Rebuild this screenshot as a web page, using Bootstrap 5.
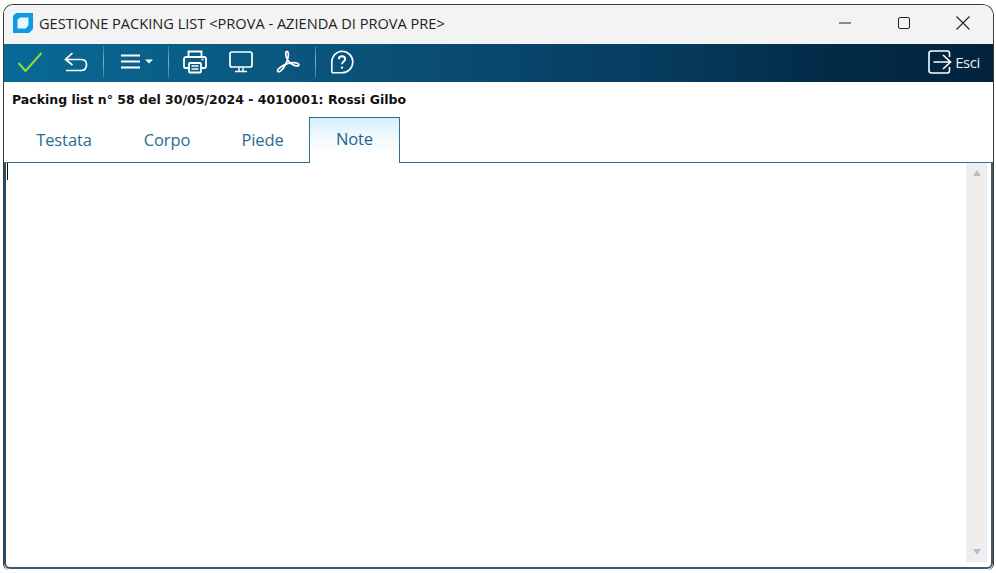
<!DOCTYPE html>
<html lang="it">
<head>
<meta charset="utf-8">
<title>Gestione Packing List</title>
<link href="https://cdn.jsdelivr.net/npm/bootstrap@5.3.0/dist/css/bootstrap.min.css" rel="stylesheet">
<style>
html,body{height:100%;background:#fff;overflow:hidden}
body{padding:4px 2px 3px 3px}
.app-window{height:566px;border:1px solid #3a3a3a;border-bottom:0;border-radius:10px 12px 6px 6px;background:#fff;overflow:hidden}
.title-bar{height:39px;background:#f3f3f3;font:14.6px "Open Sans",sans-serif;color:#222;padding:0 0 3px 9px}
.title-text{margin-left:6px}
.win-btn{width:59px;height:36px;display:flex;align-items:center;justify-content:center}
.win-controls{margin-left:auto;margin-right:1px}
.tool-bar{height:38px;background:linear-gradient(90deg,#076a96 0%,#0a5b83 22%,#0a4d74 42%,#063a5c 68%,#032c49 82%,#02233d 100%);padding:0 13px 2px 4px;color:#fff}
.tool-icon{display:flex;align-items:center;justify-content:center;height:36px}
.tool-check{width:44px}
.tool-undo{width:47px;margin-right:4px}
.tool-menu{width:64px;padding-left:2px}
.tool-print{width:52px;margin-right:1px}
.tool-screen{width:38px}
.tool-pdf{width:55px}
.tool-help{width:52px}
.tool-sep{width:1px;height:32px;background:linear-gradient(180deg,#2c7ea6,#7fb2cb 50%,#2c7ea6)}
.exit-group{margin-left:auto}
.exit-label{font:15px "Open Sans",sans-serif;letter-spacing:-.4px;color:#e8eef2;margin-left:3px}
.exit-icon{margin-left:-2px}
.doc-heading{height:35px;padding:9px 0 0 8px;font:700 12.5px "DejaVu Sans",sans-serif;color:#111;line-height:18px;white-space:nowrap}
.tab-strip{height:46px;border-bottom:1px solid #2f6f8f;align-items:flex-end}
.tab-item{height:45px;display:flex;align-items:center;justify-content:center;font:16.5px "Open Sans",sans-serif;letter-spacing:-.1px;color:#2b6c90}
.tab-t{width:114px;margin-left:3px}
.tab-c{width:94px;margin-left:-1px}
.tab-p{width:97px}
.tab-n{width:91px;height:46px;margin-left:-2px;margin-bottom:-1px;border:1px solid #2f6f8f;border-bottom:0;background:linear-gradient(180deg,#d6effb 0%,#f2fafe 45%,#fff 80%);padding-bottom:5px;color:#1f6488}
.note-area{height:406px;border-left:2px solid #27506e;border-bottom:2px solid #3c5a70;border-right:2px solid #3d5a70;border-radius:0 0 6px 6px}
.caret-line{width:1px;height:17px;background:#111;margin:0 0 0 1px}
.scroll-track{width:21px;height:399px;margin-right:4px;background:#eeeeee;padding:7px 0}
.tri-up{width:0;height:0;border:4.5px solid transparent;border-top:0;border-bottom:6px solid #b9bec6}
.tri-down{width:0;height:0;border:4.5px solid transparent;border-bottom:0;border-top:6px solid #b9bec6}
</style>
</head>
<body>
<div class="app-window d-flex flex-column">
  <div class="title-bar d-flex align-items-center flex-shrink-0">
    <svg width="20" height="20" viewBox="0 0 20 20"><path d="M3 0H20V16L16 20H0V3Z" fill="#0a9be3"/><path d="M7 4.500H15.500V12L13 15.500H4.500V7Z" fill="#eaf7fd"/></svg>
    <span class="title-text">GESTIONE PACKING LIST &lt;PROVA - AZIENDA DI PROVA PRE&gt;</span>
    <div class="win-controls d-flex">
      <div class="win-btn"><svg width="12" height="12" viewBox="0 0 12 12"><path d="M0 6H12" stroke="#222"/></svg></div>
      <div class="win-btn"><svg width="12" height="12" viewBox="0 0 12 12"><rect x=".5" y=".5" width="11" height="11" rx="1.500" fill="none" stroke="#222"/></svg></div>
      <div class="win-btn"><svg width="14" height="14" viewBox="0 0 14 14"><path d="M.5.5L13.500 13.500M13.500.5L.5 13.500" stroke="#222" stroke-width="1.100"/></svg></div>
    </div>
  </div>
  <div class="tool-bar d-flex align-items-center flex-shrink-0">
    <div class="tool-icon tool-check"><svg width="26" height="22" viewBox="0 0 26 22"><path d="M1.500 12L8.500 20L24.500 2" fill="none" stroke="#8fdc3e" stroke-width="2"/></svg></div>
    <div class="tool-icon tool-undo"><svg width="24" height="20" viewBox="0 0 24 20"><path d="M8.500 1L1.500 7.500L8.500 13M2 7.500H17C20.500 7.500 22.500 9.500 22.500 12.500C22.500 16 20.500 18.500 17 18.500H2" fill="none" stroke="#fff" stroke-width="1.700"/></svg></div>
    <div class="tool-sep"></div>
    <div class="tool-icon tool-menu"><svg width="33" height="16" viewBox="0 0 33 16"><path d="M0 1.500H19M0 7.500H19M0 13.500H19" stroke="#fff" stroke-width="1.800"/><path d="M24 5.500H32L28 9.500Z" fill="#fff"/></svg></div>
    <div class="tool-sep"></div>
    <div class="tool-icon tool-print"><svg width="24" height="24" viewBox="0 0 24 24"><path d="M5.500 7V1.500H18.500V7M5.500 18H2.800C1.800 18 1 17.200 1 16.200V9C1 8 1.800 7 2.800 7H21.200C22.200 7 23 8 23 9V16.200C23 17.200 22.200 18 21.200 18H18.500" fill="none" stroke="#fff" stroke-width="1.800"/><rect x="6" y="13" width="12" height="9.500" rx="1" fill="none" stroke="#fff" stroke-width="1.800"/><path d="M8.500 16H15.500M8.500 19H15.500" stroke="#fff" stroke-width="1.300"/><path d="M18.500 9.500H20.500" stroke="#fff" stroke-width="1.500"/></svg></div>
    <div class="tool-icon tool-screen"><svg width="24" height="22" viewBox="0 0 24 22"><rect x="1" y="1" width="22" height="15" rx="2" fill="none" stroke="#fff" stroke-width="1.700"/><path d="M10 16.500V20M14 16.500V20" stroke="#fff" stroke-width="1.500"/><path d="M6 20.500H18" stroke="#fff" stroke-width="1.700"/></svg></div>
    <div class="tool-icon tool-pdf"><svg width="24" height="24" viewBox="0 0 24 24"><path d="M1.500 21C2.500 23.500 6.500 20.500 9.500 14.500C11.200 11 12.800 6 12.200 3C11.800 .8 9.800 1 9.700 3.200C9.500 6.500 12 11 15 13.500C17 15.200 21.200 16.800 22.700 15.300C23.500 13.800 20.500 12.700 18 12.700C13.500 12.700 8.500 14.500 5.500 16.500C3.300 18 1 19.700 1.500 21Z" fill="none" stroke="#fff" stroke-width="1.700" stroke-linejoin="round"/></svg></div>
    <div class="tool-sep"></div>
    <div class="tool-icon tool-help"><svg width="24" height="24" viewBox="0 0 24 24"><path d="M12 1.200A10.800 10.800 0 1 1 12 22.800H3.500C2.500 22.800 1.800 22 1.800 21V12A10.500 10.800 0 0 1 12 1.200Z" fill="none" stroke="#fff" stroke-width="1.600"/><path d="M8.800 9.300C8.800 7.300 10.300 6.300 12 6.300C13.800 6.300 15.200 7.400 15.200 9.100C15.200 11.500 12 11.700 12 14.300" fill="none" stroke="#fff" stroke-width="1.900"/><circle cx="12" cy="17.600" r="1.200" fill="#fff"/></svg></div>
    <div class="exit-group d-flex align-items-center">
      <svg class="exit-icon" width="24" height="24" viewBox="0 0 24 24"><path d="M21.500 7V3.500C21.500 2.200 20.800 1 19.500 1H3.500C2 1 1 2 1 3.500V20.500C1 22 2 23 3.500 23H19.500C20.800 23 21.500 22 21.500 20.500V17" fill="none" stroke="#fff" stroke-width="1.600"/><path d="M5.500 12H22M15 5L22.500 12L15 19" fill="none" stroke="#fff" stroke-width="1.600"/></svg>
      <span class="exit-label">Esci</span>
    </div>
  </div>
  <div class="doc-heading flex-shrink-0">Packing list n° 58 del 30/05/2024 - 4010001: Rossi Gilbo</div>
  <div class="tab-strip d-flex flex-shrink-0">
    <div class="tab-item tab-t">Testata</div>
    <div class="tab-item tab-c">Corpo</div>
    <div class="tab-item tab-p">Piede</div>
    <div class="tab-item tab-n">Note</div>
  </div>
  <div class="note-area d-flex justify-content-between flex-shrink-0">
    <div class="caret-line"></div>
    <div class="scroll-track d-flex flex-column justify-content-between align-items-center">
      <div class="tri-up"></div>
      <div class="tri-down"></div>
    </div>
  </div>
</div>
<script src="https://cdn.jsdelivr.net/npm/bootstrap@5.3.0/dist/js/bootstrap.bundle.min.js"></script>
</body>
</html>
